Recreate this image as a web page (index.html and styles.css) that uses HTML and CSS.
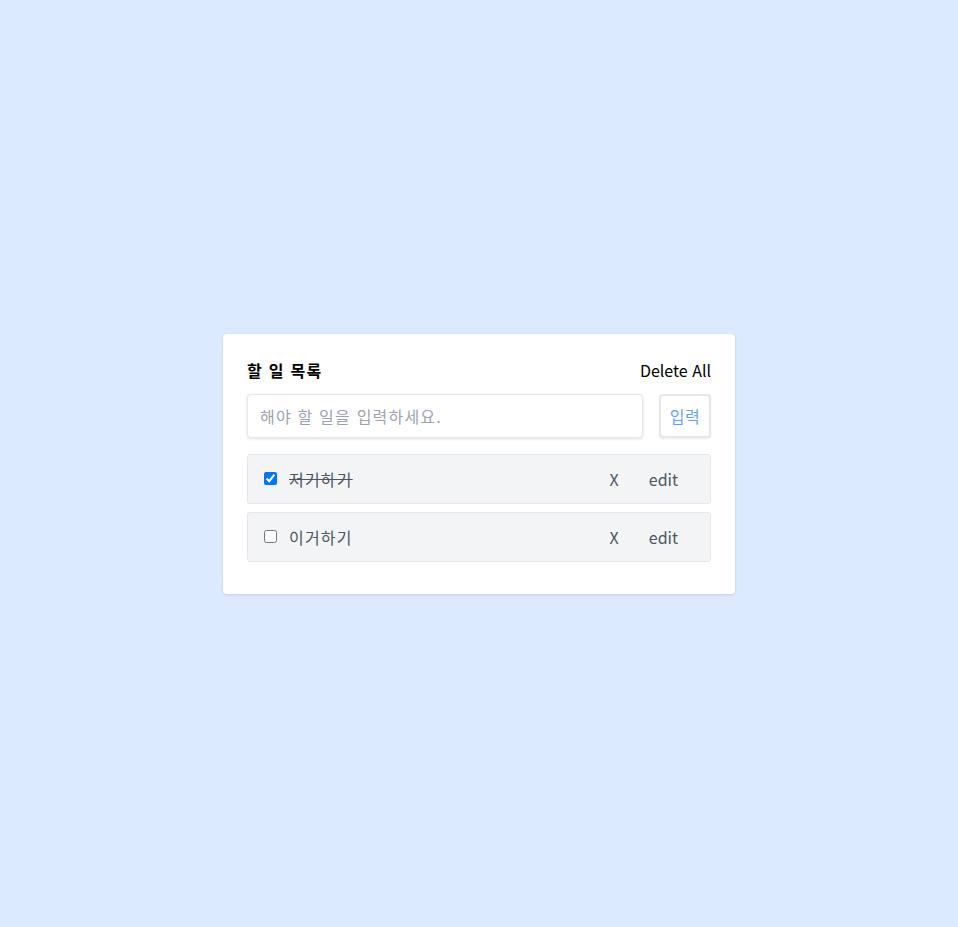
FILE: index.html
```html
<!DOCTYPE html>
<html lang="ko">
<head>
<meta charset="utf-8">
<title>할 일 목록</title>
<link rel="stylesheet" href="styles.css">
</head>
<body>
<div class="page">
  <div class="card">
    <div class="header">
      <h1 class="title">할 일 목록</h1>
      <button class="delete-all">Delete All</button>
    </div>
    <form class="add-form">
      <input class="add-input" type="text" placeholder="해야 할 일을 입력하세요.">
      <button class="add-btn" type="button">입력</button>
    </form>
    <ul class="list">
      <li class="item">
        <input class="check" type="checkbox" checked>
        <span class="text done">저거하기</span>
        <button class="act act-del">X</button>
        <button class="act">edit</button>
      </li>
      <li class="item">
        <input class="check" type="checkbox">
        <span class="text">이거하기</span>
        <button class="act act-del">X</button>
        <button class="act">edit</button>
      </li>
    </ul>
  </div>
</div>
</body>
</html>
```
FILE: styles.css
```css
* { box-sizing: border-box; }
html, body { margin: 0; padding: 0; }
body {
  background: #dbeafe;
  font-family: "Noto Sans CJK KR", "Noto Sans", sans-serif;
  color: #111827;
}
.page {
  min-height: 100vh;
  display: flex;
  align-items: center;
  justify-content: center;
}
.card {
  width: 512px;
  background: #fff;
  border-radius: 4px;
  padding: 24px 24px 32px;
  box-shadow: 0 1px 3px rgba(0,0,0,0.12);
}
.header {
  display: flex;
  justify-content: space-between;
  align-items: center;
  height: 24px;
  margin-bottom: 12px;
}
.title {
  margin: 0;
  font-size: 16px;
  font-weight: 700;
  letter-spacing: 1.3px;
  color: #000;
}
.delete-all {
  background: none;
  border: 0;
  padding: 0;
  font: inherit;
  font-size: 16px;
  color: #000;
  cursor: pointer;
}
.add-form {
  display: flex;
  gap: 16px;
  margin: 0 0 16px;
}
.add-input {
  flex: 1;
  height: 44px;
  border: 1px solid #e5e7eb;
  border-radius: 4px;
  padding: 0 12px;
  font: inherit;
  font-size: 16px;
  letter-spacing: 1.2px;
  box-shadow: 0 1px 3px rgba(0,0,0,0.12);
  outline: none;
}
.add-input::placeholder { color: #9ca3af; }
.add-btn {
  width: 52px;
  height: 44px;
  border: 2px solid #e5e7eb;
  border-radius: 4px;
  background: #fff;
  color: #60a5fa;
  font: inherit;
  font-size: 16px;
  letter-spacing: 0.5px;
  padding: 0;
  box-shadow: 0 1px 2px rgba(0,0,0,0.08);
}
.list {
  list-style: none;
  margin: 0;
  padding: 0;
  display: flex;
  flex-direction: column;
  gap: 8px;
}
.item {
  display: flex;
  align-items: center;
  height: 50px;
  padding: 0 16px;
  background: #f3f4f6;
  border: 1px solid #e5e7eb;
  border-radius: 3px;
}
.check {
  width: 13px;
  height: 13px;
  margin: 0 12px 0 0;
}
.text {
  flex: 1;
  font-size: 16px;
  letter-spacing: 1.2px;
  color: #4b5563;
}
.text.done { text-decoration: line-through; }
.act {
  background: none;
  border: 0;
  padding: 0 16px;
  font: inherit;
  font-size: 16px;
  color: #4b5563;
  cursor: pointer;
}
.act-del { padding-right: 14px; }
```
